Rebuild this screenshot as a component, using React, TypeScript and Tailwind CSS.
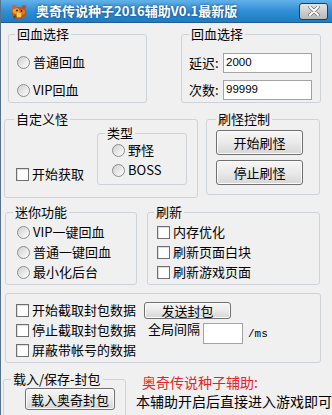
import React from "react";

const Radio = ({ label }: { label: string }) => (
  <div className="flex items-center h-4 gap-[3px]">
    <span className="w-[13px] h-[13px] rounded-full border border-[#8c8c8c] bg-linear-to-br from-[#cfcfcf] to-white" />
    <span className="leading-4">{label}</span>
  </div>
);

const Check = ({ label }: { label: string }) => (
  <div className="flex items-center h-4 gap-[3px]">
    <span className="w-[13px] h-[13px] border border-[#707070] bg-white shadow-[inset_1px_1px_0_#dcdcdc]" />
    <span className="leading-4">{label}</span>
  </div>
);

const Btn = ({ label, className }: { label: string; className: string }) => (
  <button
    className={`flex items-center justify-center leading-none rounded-[3px] border border-[#707070] bg-linear-to-b from-[#f6f6f6] via-[#eaeaea] to-[#d6d6d6] shadow-[inset_0_0_0_1px_#fbfbfb] ${className}`}
  >
    {label}
  </button>
);

const Group = ({
  title,
  className,
  legendClass,
  children,
}: {
  title: string;
  className: string;
  legendClass: string;
  children: React.ReactNode;
}) => (
  <fieldset className={`border border-[#cdd3d8] rounded-[3px] ${className}`}>
    <legend className={`leading-[14px] px-[2px] ${legendClass}`}>{title}</legend>
    {children}
  </fieldset>
);

const Field = ({ label, value }: { label: string; value: string }) => (
  <div className="flex items-center h-5">
    <span className="w-[34px]">{label}</span>
    <div className="w-[89px] h-5 border border-[#a3a3a3] bg-white px-[2px] flex items-center text-[11.5px] [font-family:'Liberation_Sans',sans-serif]">
      {value}
    </div>
  </div>
);

const PetIcon = () => (
  <svg width="18" height="17" viewBox="0 0 18 17">
    <ellipse cx="9" cy="10" rx="7.5" ry="6" fill="#b4581c" />
    <ellipse cx="6" cy="8" rx="3.5" ry="3" fill="#f0a030" />
    <ellipse cx="12" cy="9" rx="3" ry="2.6" fill="#e87828" />
    <circle cx="9" cy="12" r="2.5" fill="#f6d04a" />
    <circle cx="4" cy="4" r="2.2" fill="#d8602a" />
    <circle cx="14" cy="4" r="2" fill="#c04a1e" />
    <circle cx="7" cy="7.5" r="0.9" fill="#3a1a08" />
    <circle cx="11.5" cy="8" r="0.9" fill="#3a1a08" />
    <path d="M3 14 L6 12 L5 16 Z" fill="#7a3410" />
  </svg>
);

const App = () => {
  return (
    <div className="w-[332px] h-[415px] overflow-hidden bg-[#f0f0f0] text-[13px] text-black [font-family:'Noto_Sans_CJK_SC',sans-serif] border-l border-[#56718a]">
      <div className="h-[23px] flex items-center bg-linear-to-b from-[#62b2e8] via-[#2f8fd6] to-[#1f7cc4] border-b border-[#1d5f93]">
        <div className="ml-[9px]">
          <PetIcon />
        </div>
        <span className="ml-[8px] text-[13px] font-bold text-white [text-shadow:0_0_3px_#0b3d6b]">
          奥奇传说种子2016辅助V0.1最新版
        </span>
        <div className="ml-auto mr-[4px] w-[29px] h-[17px] rounded-[3px] border border-[#2e3b47] bg-linear-to-b from-[#e4e4e4] to-[#b8b8b8] flex items-center justify-center">
          <svg width="12" height="10" viewBox="0 0 12 10">
            <path d="M2 1 L10 9 M10 1 L2 9" stroke="#6b6b6b" strokeWidth="3.4" strokeLinecap="round" />
            <path d="M2 1 L10 9 M10 1 L2 9" stroke="#ffffff" strokeWidth="2" strokeLinecap="round" />
          </svg>
        </div>
      </div>

      <div className="flex flex-col">
        {/* row 1 */}
        <div className="flex pt-[4px]">
          <Group title="回血选择" className="ml-[7px] w-[139px] h-[76px]" legendClass="ml-[6px]">
            <div className="flex flex-col pt-[13px] pl-[8px] gap-[12px]">
              <Radio label="普通回血" />
              <Radio label="VIP回血" />
            </div>
          </Group>
          <Group title="回血选择" className="ml-[34px] w-[140px] h-[76px]" legendClass="ml-[7px]">
            <div className="flex flex-col pt-[12px] pl-[7px] gap-[7px]">
              <Field label="延迟:" value="2000" />
              <Field label="次数:" value="99999" />
            </div>
          </Group>
        </div>

        {/* row 2 */}
        <div className="flex mt-[9px]">
          <Group title="自定义怪" className="ml-[3px] w-[194px] h-[86px]" legendClass="ml-[9px]">
            <div className="flex">
              <div className="w-[92px] pt-[40px] pl-[11px]">
                <Check label="开始获取" />
              </div>
              <Group title="类型" className="w-[90px] h-[59px]" legendClass="ml-[7px]">
                <div className="flex flex-col pt-[2px] pl-[14px] gap-[4px]">
                  <Radio label="野怪" />
                  <Radio label="BOSS" />
                </div>
              </Group>
            </div>
          </Group>
          <Group title="刷怪控制" className="ml-[8px] w-[114px] h-[83px]" legendClass="ml-[9px]">
            <div className="flex flex-col pt-[4px] pl-[9px] gap-[5px]">
              <Btn label="开始刷怪" className="w-[87px] h-[25px]" />
              <Btn label="停止刷怪" className="w-[87px] h-[25px]" />
            </div>
          </Group>
        </div>

        {/* row 3 */}
        <div className="flex mt-[7px]">
          <Group title="迷你功能" className="ml-[4px] w-[132px] h-[80px]" legendClass="ml-[7px]">
            <div className="flex flex-col pt-[5px] pl-[11px] gap-[4px]">
              <Radio label="VIP一键回血" />
              <Radio label="普通一键回血" />
              <Radio label="最小化后台" />
            </div>
          </Group>
          <Group title="刷新" className="ml-[10px] w-[173px] h-[80px]" legendClass="ml-[6px]">
            <div className="flex flex-col pt-[5px] pl-[9px] gap-[4px]">
              <Check label="内存优化" />
              <Check label="刷新页面白块" />
              <Check label="刷新游戏页面" />
            </div>
          </Group>
        </div>

        {/* row 4 */}
        <div className="flex mt-[8px] ml-[4px] w-[316px] h-[70px] border border-[#cdd3d8] rounded-[3px]">
          <div className="w-[138px] flex flex-col pl-[10px] pt-[8px] gap-[4px]">
            <Check label="开始截取封包数据" />
            <Check label="停止截取封包数据" />
            <Check label="屏蔽带帐号的数据" />
          </div>
          <div className="flex flex-col pt-[8px]">
            <Btn label="发送封包" className="w-[87px] h-[17px]" />
            <div className="flex items-start mt-[2px]">
              <span className="ml-[4px] leading-4">全局间隔</span>
              <div className="ml-[3px] mt-[2px] w-[40px] h-[21px] border border-[#a3a3a3] bg-white" />
              <span className="ml-[5px] mt-[5px] leading-4 text-[11px] [font-family:'Liberation_Mono',monospace]">
                /ms
              </span>
            </div>
          </div>
        </div>

        {/* row 5 */}
        <div className="flex mt-[9px]">
          <Group title="载入/保存-封包" className="ml-[2px] w-[124px] h-[50px]" legendClass="ml-[7px]">
            <div className="pt-[2px] pl-[21px]">
              <Btn label="载入奥奇封包" className="w-[90px] h-[22px]" />
            </div>
          </Group>
          <div className="flex flex-col ml-[10px] text-[14px] leading-4">
            <span className="ml-[6px] mt-[2px] text-[#e3242b]">奥奇传说种子辅助:</span>
            <span className="mt-[3px] whitespace-nowrap">本辅助开启后直接进入游戏即可</span>
          </div>
        </div>
      </div>
    </div>
  );
};

export default App;
